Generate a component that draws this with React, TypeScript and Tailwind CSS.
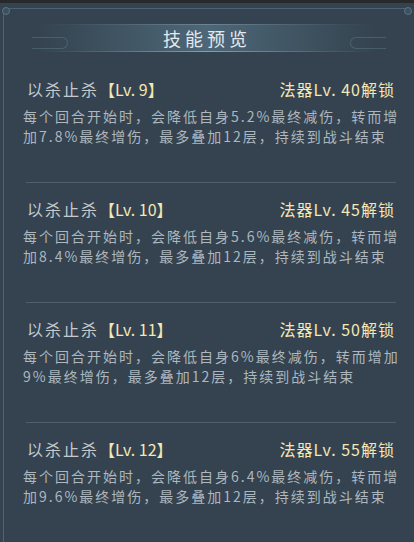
const skills = [
  {
    level: 9,
    unlock: 40,
    lines: [
      "每个回合开始时，会降低自身5.2%最终减伤，转而增",
      "加7.8%最终增伤，最多叠加12层，持续到战斗结束",
    ],
  },
  {
    level: 10,
    unlock: 45,
    lines: [
      "每个回合开始时，会降低自身5.6%最终减伤，转而增",
      "加8.4%最终增伤，最多叠加12层，持续到战斗结束",
    ],
  },
  {
    level: 11,
    unlock: 50,
    lines: [
      "每个回合开始时，会降低自身6%最终减伤，转而增加",
      "9%最终增伤，最多叠加12层，持续到战斗结束",
    ],
  },
  {
    level: 12,
    unlock: 55,
    lines: [
      "每个回合开始时，会降低自身6.4%最终减伤，转而增",
      "加9.6%最终增伤，最多叠加12层，持续到战斗结束",
    ],
  },
];

function Header() {
  return (
    <div className="relative mx-[8px] mt-[21px] h-[28px]">
      <div className="absolute inset-x-[34px] top-0 h-px bg-gradient-to-r from-transparent via-[#6b8596] to-transparent" />
      <div className="absolute inset-x-[30px] top-px bottom-px bg-gradient-to-r from-transparent via-[#4d6778] to-transparent" />
      <div className="absolute inset-x-[30px] bottom-0 h-px bg-gradient-to-r from-transparent via-[#7fa2b6] to-transparent" />

      {/* side pills */}
      <div className="absolute left-[24px] top-[13px] h-[12px] w-[36px] rounded-r-full border border-l-0 border-[#55707f]/60" />
      <div className="absolute right-[20px] top-[13px] h-[12px] w-[36px] rounded-l-full border border-r-0 border-[#55707f]/60" />

      <div className="relative flex h-full items-center justify-center">
        <span className="text-[18px] leading-none tracking-[4px] text-[#e3e9ee]">
          技能预览
        </span>
      </div>
    </div>
  );
}

function SkillRow({
  level,
  unlock,
  lines,
}: {
  level: number;
  unlock: number;
  lines: string[];
}) {
  return (
    <div className="flex flex-col">
      <div className="flex h-[24px] items-center justify-between pl-[27px] pr-[19px] text-[16px]">
        <div className="flex items-center">
          <span className="tracking-[2px] text-[#c3cad0]">以杀止杀</span>
          <span className="text-[#f6e7b2]">【Lv. {level}】</span>
        </div>
        <span className="tracking-[1px] text-[#f6e7b2]">
          法器Lv. {unlock}解锁
        </span>
      </div>
      <div className="mt-[5px] pl-[23px] text-[14px] leading-[20px] tracking-[2px] text-[#adb7bf]">
        {lines.map((line) => (
          <div key={line} className="whitespace-nowrap">
            {line}
          </div>
        ))}
      </div>
    </div>
  );
}

export default function App() {
  return (
    <div
      className="relative h-[542px] w-[414px] overflow-hidden bg-[#34434f]"
      style={{ fontFamily: '"Noto Sans CJK SC", "Noto Sans", sans-serif' }}
    >
      <div className="h-[3px] bg-[#27292b]" />

      {/* outer frame lines */}
      <div className="absolute left-[3px] top-[8px] bottom-0 w-px bg-[#4d6373]" />
      <div className="absolute left-[8px] right-[8px] top-[8px] h-px bg-[#4d6373]" />
      <div className="absolute left-[2px] top-[7px] h-[8px] w-[8px] rounded-full border border-[#5d7484] bg-[#3c5060]" />
      <div className="absolute right-[2px] top-[7px] h-[8px] w-[8px] rounded-full border border-[#5d7484] bg-[#3c5060]" />

      <Header />

      <div className="mt-[25px] flex flex-col">
        {skills.map((s) => (
          <div key={s.level} className="flex flex-col">
            <SkillRow {...s} />
            <div className="ml-[26px] mr-[18px] mt-[36px] mb-[14px] h-px bg-[#4e5e6a]" />
          </div>
        ))}
      </div>
    </div>
  );
}
